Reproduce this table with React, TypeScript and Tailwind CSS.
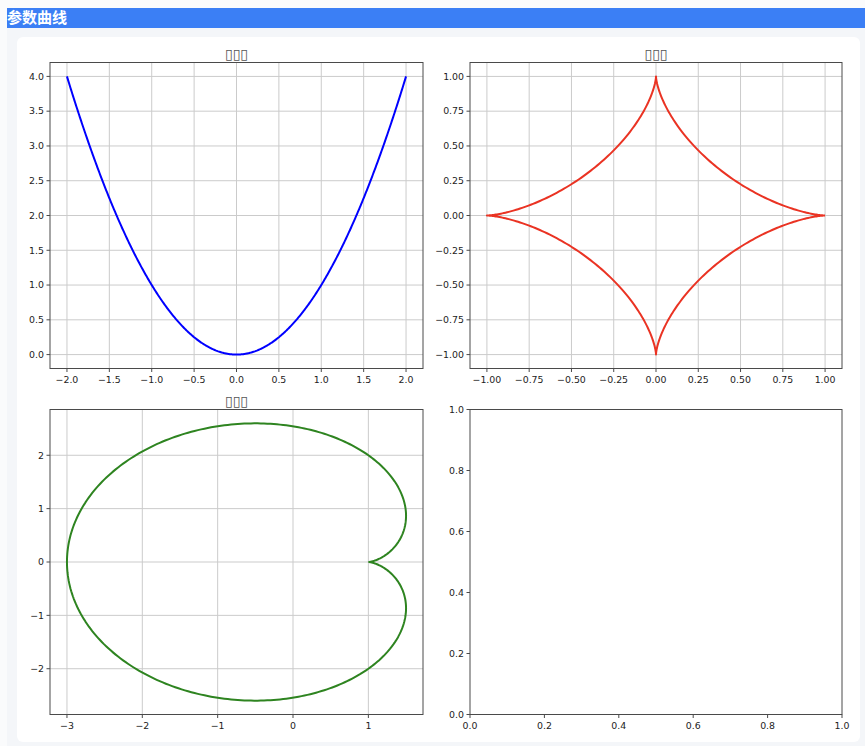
import React from "react"

type AxesProps = {
  x0: number
  x1: number
  y0: number
  y1: number
  xr: [number, number]
  yr: [number, number]
  xticks: number[]
  yticks: number[]
  xdec: number
  ydec: number
  grid: boolean
  title?: string
  color?: string
  fn?: (t: number) => [number, number]
  tr?: [number, number]
}

const fmt = (v: number, d: number) => {
  const s = Math.abs(v).toFixed(d)
  return (v < -1e-9 ? "\u2212" : "") + s
}

function Axes({ x0, x1, y0, y1, xr, yr, xticks, yticks, xdec, ydec, grid, title, color, fn, tr }: AxesProps) {
  const sx = (v: number) => x0 + ((v - xr[0]) / (xr[1] - xr[0])) * (x1 - x0)
  const sy = (v: number) => y1 - ((v - yr[0]) / (yr[1] - yr[0])) * (y1 - y0)

  let d = ""
  if (fn && tr) {
    const n = 500
    for (let i = 0; i <= n; i++) {
      const t = tr[0] + ((tr[1] - tr[0]) * i) / n
      const [x, y] = fn(t)
      d += (i === 0 ? "M" : "L") + sx(x).toFixed(2) + " " + sy(y).toFixed(2)
    }
  }

  return (
    <g>
      {grid &&
        xticks.map((v) => (
          <line key={"gx" + v} x1={sx(v)} x2={sx(v)} y1={y0} y2={y1} stroke="#cbcbcb" strokeWidth={1} />
        ))}
      {grid &&
        yticks.map((v) => (
          <line key={"gy" + v} x1={x0} x2={x1} y1={sy(v)} y2={sy(v)} stroke="#cbcbcb" strokeWidth={1} />
        ))}
      {d && (
        <svg x={x0} y={y0} width={x1 - x0} height={y1 - y0} viewBox={`${x0} ${y0} ${x1 - x0} ${y1 - y0}`} overflow="hidden">
          <path d={d} fill="none" stroke={color} strokeWidth={2} strokeLinejoin="round" />
        </svg>
      )}
      <rect x={x0} y={y0} width={x1 - x0} height={y1 - y0} fill="none" stroke="#4a4a4a" strokeWidth={1} />
      {xticks.map((v) => (
        <g key={"tx" + v}>
          <line x1={sx(v)} x2={sx(v)} y1={y1} y2={y1 + 3.5} stroke="#4a4a4a" strokeWidth={1} />
          <text x={sx(v)} y={y1 + 14.5} textAnchor="middle" fontSize={9.4} fill="#222">
            {fmt(v, xdec)}
          </text>
        </g>
      ))}
      {yticks.map((v) => (
        <g key={"ty" + v}>
          <line x1={x0 - 3.5} x2={x0} y1={sy(v)} y2={sy(v)} stroke="#4a4a4a" strokeWidth={1} />
          <text x={x0 - 6} y={sy(v) + 3.3} textAnchor="end" fontSize={9.4} fill="#222">
            {fmt(v, ydec)}
          </text>
        </g>
      ))}
      {title && (
        <text x={(x0 + x1) / 2} y={y0 - 4} textAnchor="middle" fontSize={14} fill="#555">
          {title}
        </text>
      )}
    </g>
  )
}

const range = (a: number, b: number, s: number) => {
  const out: number[] = []
  for (let v = a; v <= b + 1e-9; v += s) out.push(Math.round(v * 1000) / 1000)
  return out
}

export default function App() {
  const m3 = 2.598 * 1.1
  return (
    <div className="w-[865px] h-[746px] bg-[#fafbfc] pt-[8px] pl-[7px] overflow-hidden" style={{ fontFamily: "'DejaVu Sans', 'Noto Sans CJK SC', sans-serif" }}>
      <div className="h-[20px] bg-[#3b7ff5] flex items-center">
        <h1 className="text-[15px] font-bold text-white leading-none">参数曲线</h1>
      </div>
      <div className="bg-[#f4f6f9] pl-[10px] pt-[9px] pr-[5px] h-[718px]">
        <div className="bg-white rounded-md w-[843px] h-[705px]">
          <svg width={843} height={705} viewBox="17 37 843 705" fontFamily="'DejaVu Sans', sans-serif">
            <Axes
              x0={50} x1={423} y0={62.5} y1={368.5}
              xr={[-2.2, 2.2]} yr={[-0.2, 4.2]}
              xticks={range(-2, 2, 0.5)} yticks={range(0, 4, 0.5)}
              xdec={1} ydec={1} grid title="▯▯▯" color="#0000ff"
              fn={(t) => [t, t * t]} tr={[-2, 2]}
            />
            <Axes
              x0={470} x1={842} y0={62.5} y1={368.5}
              xr={[-1.1, 1.1]} yr={[-1.1, 1.1]}
              xticks={range(-1, 1, 0.25)} yticks={range(-1, 1, 0.25)}
              xdec={2} ydec={2} grid title="▯▯▯" color="#ea3323"
              fn={(t) => [Math.cos(t) ** 3, Math.sin(t) ** 3]} tr={[0, Math.PI * 2]}
            />
            <Axes
              x0={50} x1={423} y0={409.5} y1={714.5}
              xr={[-3.225, 1.725]} yr={[-m3, m3]}
              xticks={[-3, -2, -1, 0, 1]} yticks={[-2, -1, 0, 1, 2]}
              xdec={0} ydec={0} grid title="▯▯▯" color="#2e8420"
              fn={(t) => [2 * Math.cos(t) - Math.cos(2 * t), 2 * Math.sin(t) - Math.sin(2 * t)]} tr={[0, Math.PI * 2]}
            />
            <Axes
              x0={470} x1={842} y0={409.5} y1={714.5}
              xr={[0, 1]} yr={[0, 1]}
              xticks={range(0, 1, 0.2)} yticks={range(0, 1, 0.2)}
              xdec={1} ydec={1} grid={false}
            />
          </svg>
        </div>
      </div>
    </div>
  )
}
